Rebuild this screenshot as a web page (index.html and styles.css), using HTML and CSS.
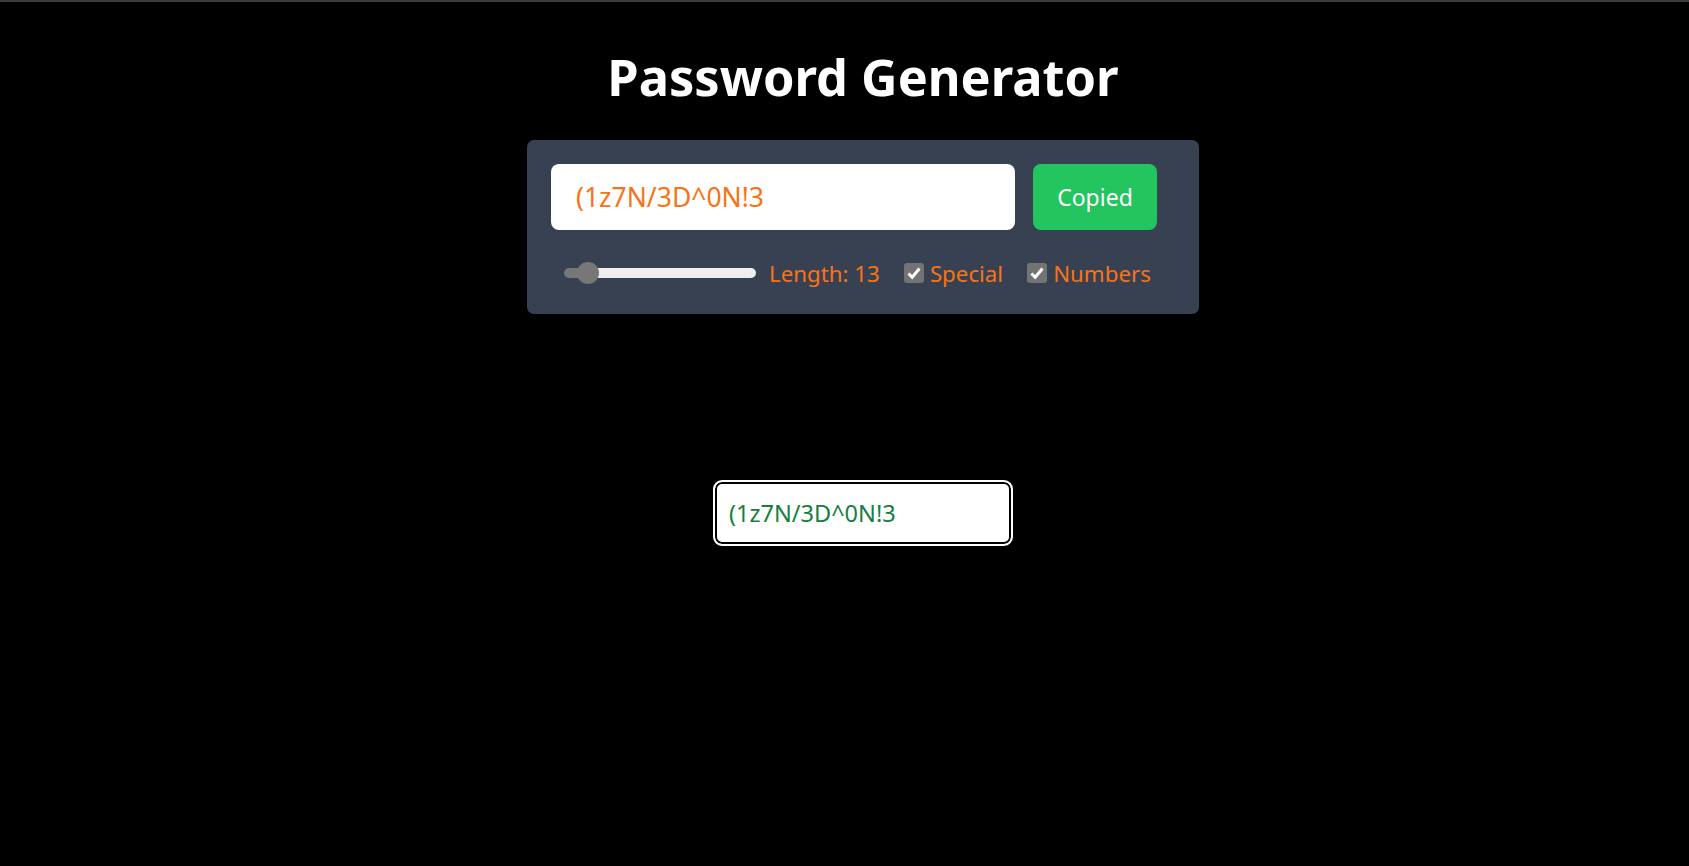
FILE: index.html
```html
<!DOCTYPE html>
<html lang="en">
<head>
<meta charset="utf-8">
<title>Password Generator</title>
<link rel="stylesheet" href="styles.css">
</head>
<body>
<div class="page">
  <h1 class="title">Password Generator</h1>
  <div class="card">
    <div class="row-top">
      <input class="pw-input" type="text" value="(1z7N/3D^0N!3" readonly>
      <button class="copy-btn">Copied</button>
    </div>
    <div class="row-opts">
      <input class="slider" type="range" min="6" max="100" value="13">
      <label class="opt-label">Length: 13</label>
      <label class="opt"><input class="check" type="checkbox" checked><span>Special</span></label>
      <label class="opt"><input class="check" type="checkbox" checked><span>Numbers</span></label>
    </div>
  </div>
  <div class="result-wrap">
    <div class="result">(1z7N/3D^0N!3</div>
  </div>
</div>
</body>
</html>
```
FILE: styles.css
```css
html, body {
  margin: 0;
  padding: 0;
  background: #000;
}
body {
  border-top: 2px solid #3c3c3c;
  min-height: 864px;
  font-family: "Noto Sans", "Open Sans", sans-serif;
}
.page {
  padding-left: 37px;
}
.title {
  margin: 0;
  padding-top: 41px;
  text-align: center;
  color: #fff;
  font-size: 50.5px;
  line-height: 68px;
  font-weight: 700;
}
.card {
  width: 672px;
  box-sizing: border-box;
  margin: 29px auto 0;
  background: #374151;
  border-radius: 7px;
  padding: 24px 24px 0;
  height: 174px;
}
.row-top {
  display: flex;
  gap: 18px;
}
.pw-input {
  width: 464px;
  height: 66px;
  box-sizing: border-box;
  border: none;
  border-radius: 8px;
  padding: 0 25px;
  font-family: inherit;
  font-size: 26.5px;
  color: #f97316;
  background: #fff;
  outline: none;
}
.copy-btn {
  width: 124px;
  height: 66px;
  border: none;
  border-radius: 8px;
  background: #22c55e;
  color: #fff;
  font-family: inherit;
  font-size: 23px;
  padding: 0;
}
.row-opts {
  display: flex;
  align-items: center;
  margin-top: 32px;
  padding-left: 13px;
  height: 22px;
  color: #f97316;
  font-size: 22.3px;
}
.slider {
  -webkit-appearance: none;
  appearance: none;
  width: 192px;
  height: 22px;
  margin: 0;
  background: transparent;
}
.slider::-webkit-slider-runnable-track {
  height: 10px;
  border-radius: 5px;
  background: linear-gradient(to right, #777 0 12%, #efefef 12% 100%);
}
.slider::-webkit-slider-thumb {
  -webkit-appearance: none;
  appearance: none;
  width: 22px;
  height: 22px;
  border-radius: 50%;
  background: #777;
  margin-top: -6px;
}
.opt-label {
  margin-left: 13px;
}
.opt {
  display: flex;
  align-items: center;
  gap: 6px;
  margin-left: 24px;
}
.check {
  -webkit-appearance: none;
  appearance: none;
  width: 20px;
  height: 20px;
  margin: 0;
  border-radius: 3px;
  background: #737373 url("data:image/svg+xml;utf8,<svg xmlns='http://www.w3.org/2000/svg' viewBox='0 0 20 20'><path d='M4.5 10.5 L8.2 14.2 L15.5 5.5' fill='none' stroke='white' stroke-width='3'/></svg>") center / 20px 20px no-repeat;
}
.result-wrap {
  display: flex;
  justify-content: center;
  margin-top: 166px;
}
.result {
  width: 300px;
  height: 66px;
  box-sizing: border-box;
  background: #fff;
  border: 2px solid #fff;
  border-radius: 9px;
  box-shadow: inset 0 0 0 2px #000;
  padding: 0 0 0 14px;
  display: flex;
  align-items: center;
  color: #15803d;
  font-size: 23.5px;
}
```
